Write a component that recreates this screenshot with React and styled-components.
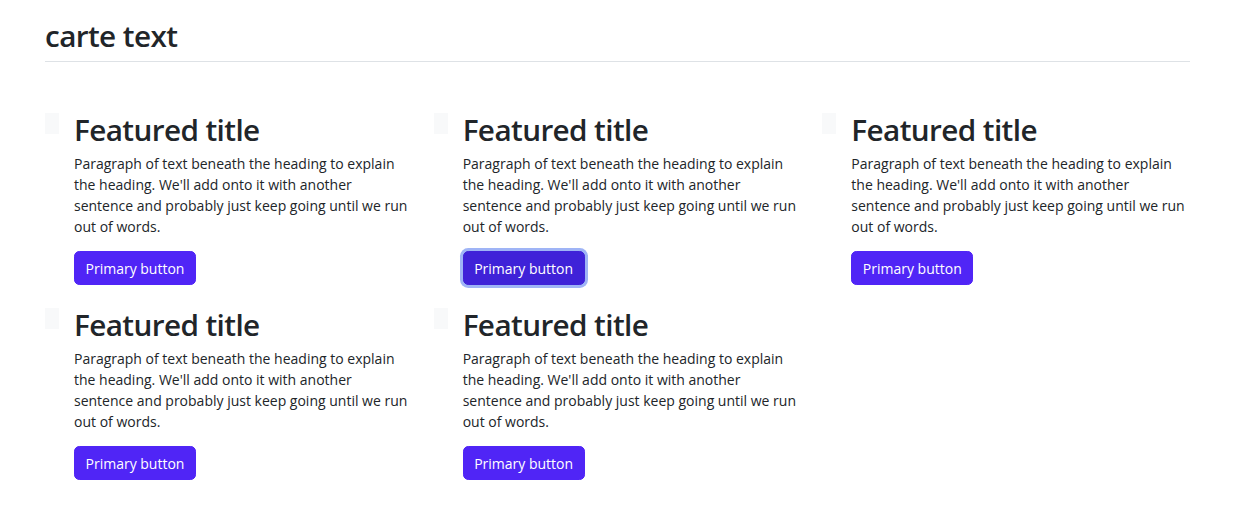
import React from "react";
import styled, {createGlobalStyle} from "styled-components";

const GlobalStyle = createGlobalStyle`
  body {
    margin: 0;
    background: #fff;
    color: #212529;
    font-family: "Open Sans", "Liberation Sans", sans-serif;
    font-size: 14px;
    line-height: 1.5;
  }
`;

const features = [
  {id: 1, focused: false},
  {id: 2, focused: true},
  {id: 3, focused: false},
  {id: 4, focused: false},
  {id: 5, focused: false},
];

export default function App() {
  return (
    <>
      <GlobalStyle />
      <Container>
        <Header>carte text</Header>
        <Grid>
          {features.map((f) => (
            <Feature key={f.id}>
              <IconSquare />
              <Body>
                <Title>Featured title</Title>
                <Text>
                  Paragraph of text beneath the heading to explain the heading.
                  We'll add onto it with another sentence and probably just keep
                  going until we run out of words.
                </Text>
                <Button href="#" $focused={f.focused}>
                  Primary button
                </Button>
              </Body>
            </Feature>
          ))}
        </Grid>
      </Container>
    </>
  );
}

const Container = styled.div`
  width: 1145px;
  margin-left: 45px;
  padding-top: 18px;
`;

const Header = styled.h2`
  margin: 0;
  padding-bottom: 7px;
  border-bottom: 1px solid #dee2e6;
  font-size: 29.7px;
  font-weight: 600;
  line-height: 1.2;
  color: #212529;
  letter-spacing: -0.6px;
`;

const Grid = styled.div`
  display: grid;
  grid-template-columns: repeat(3, 1fr);
  column-gap: 21px;
  row-gap: 22px;
  padding-top: 50px;
`;

const Feature = styled.div`
  display: flex;
  align-items: flex-start;
`;

const IconSquare = styled.div`
  flex-shrink: 0;
  width: 14px;
  height: 21px;
  margin-top: 1px;
  margin-right: 15px;
  background: #f8f9fa;
`;

const Body = styled.div`
  flex: 1;
  min-width: 0;
`;

const Title = styled.h3`
  margin: 0 0 6px;
  font-size: 29.7px;
  font-weight: 600;
  line-height: 1.2;
  color: #212529;
  letter-spacing: -0.6px;
`;

const Text = styled.p`
  margin: 0 0 14px;
  font-size: 14px;
  line-height: 21px;
`;

const Button = styled.a`
  display: inline-block;
  padding: 5.25px 10.5px;
  border: 1px solid ${(p) => (p.$focused ? "#3f22d8" : "#5025f6")};
  border-radius: 5.25px;
  background: ${(p) => (p.$focused ? "#3f22d8" : "#5025f6")};
  box-shadow: ${(p) => (p.$focused ? "0 0 0 3px #9fb4f6" : "none")};
  color: #fff;
  font-size: 14px;
  line-height: 21px;
  text-decoration: none;
`;
